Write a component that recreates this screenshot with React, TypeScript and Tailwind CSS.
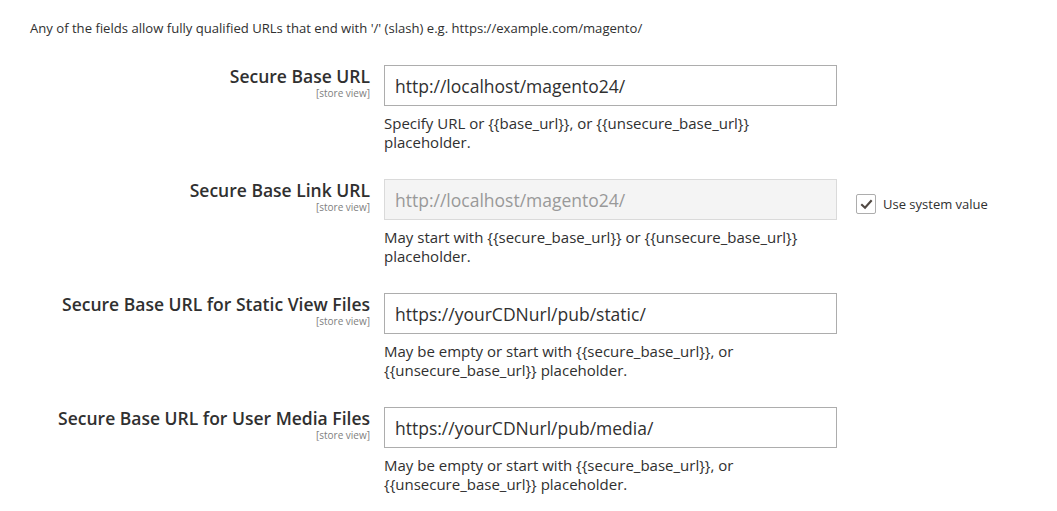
import React from 'react';

interface FieldRow {
  label: string;
  value: string;
  note: string;
  inherited?: boolean;
}

const rows: FieldRow[] = [
  {
    label: 'Secure Base URL',
    value: 'http://localhost/magento24/',
    note: 'Specify URL or {{base_url}}, or {{unsecure_base_url}} placeholder.',
  },
  {
    label: 'Secure Base Link URL',
    value: 'http://localhost/magento24/',
    note: 'May start with {{secure_base_url}} or {{unsecure_base_url}} placeholder.',
    inherited: true,
  },
  {
    label: 'Secure Base URL for Static View Files',
    value: 'https://yourCDNurl/pub/static/',
    note: 'May be empty or start with {{secure_base_url}}, or {{unsecure_base_url}} placeholder.',
  },
  {
    label: 'Secure Base URL for User Media Files',
    value: 'https://yourCDNurl/pub/media/',
    note: 'May be empty or start with {{secure_base_url}}, or {{unsecure_base_url}} placeholder.',
  },
];

const App: React.FC = () => {
  return (
    <div className="min-h-[511px] bg-white px-[30px] pt-[19px] text-[#303030]" style={{ fontFamily: '"Open Sans", sans-serif' }}>
      <p className="text-[13.1px] leading-[18px]">
        Any of the fields allow fully qualified URLs that end with '/' (slash) e.g. https://example.com/magento/
      </p>

      <div className="mt-[28px] flex flex-col gap-y-[27px]">
        {rows.map((row) => (
          <div key={row.label} className="flex items-start">
            <div className="w-[340px] text-right">
              <div className="text-[17.5px] font-semibold leading-[22px]">{row.label}</div>
              <div className="text-[10px] leading-[12px] text-[#808080]">[store view]</div>
            </div>

            <div className="ml-[14px] w-[453px]">
              <input
                type="text"
                readOnly
                disabled={row.inherited}
                value={row.value}
                className={`block h-[41px] w-full border px-[10px] text-[17.5px] outline-none ${
                  row.inherited
                    ? 'border-[#dadada] bg-[#f4f4f4] text-[#999999]'
                    : 'border-[#adadad] bg-white text-[#303030]'
                }`}
              />
              <p className="mt-[8px] text-[15px] leading-[19px]">{row.note}</p>
            </div>

            {row.inherited && (
              <label className="ml-[19px] mt-[15px] flex items-center gap-[7px] text-[13px] leading-[18px]">
                <span className="flex h-[20px] w-[20px] items-center justify-center rounded-[2px] border border-[#adadad] bg-white">
                  <svg viewBox="0 0 16 16" className="h-[13px] w-[13px]" fill="none" stroke="#514943" strokeWidth="2.6">
                    <path d="M2.5 8.5 L6.2 12 L13.5 3.8" strokeLinecap="square" />
                  </svg>
                </span>
                Use system value
              </label>
            )}
          </div>
        ))}
      </div>
    </div>
  );
};

export default App;
